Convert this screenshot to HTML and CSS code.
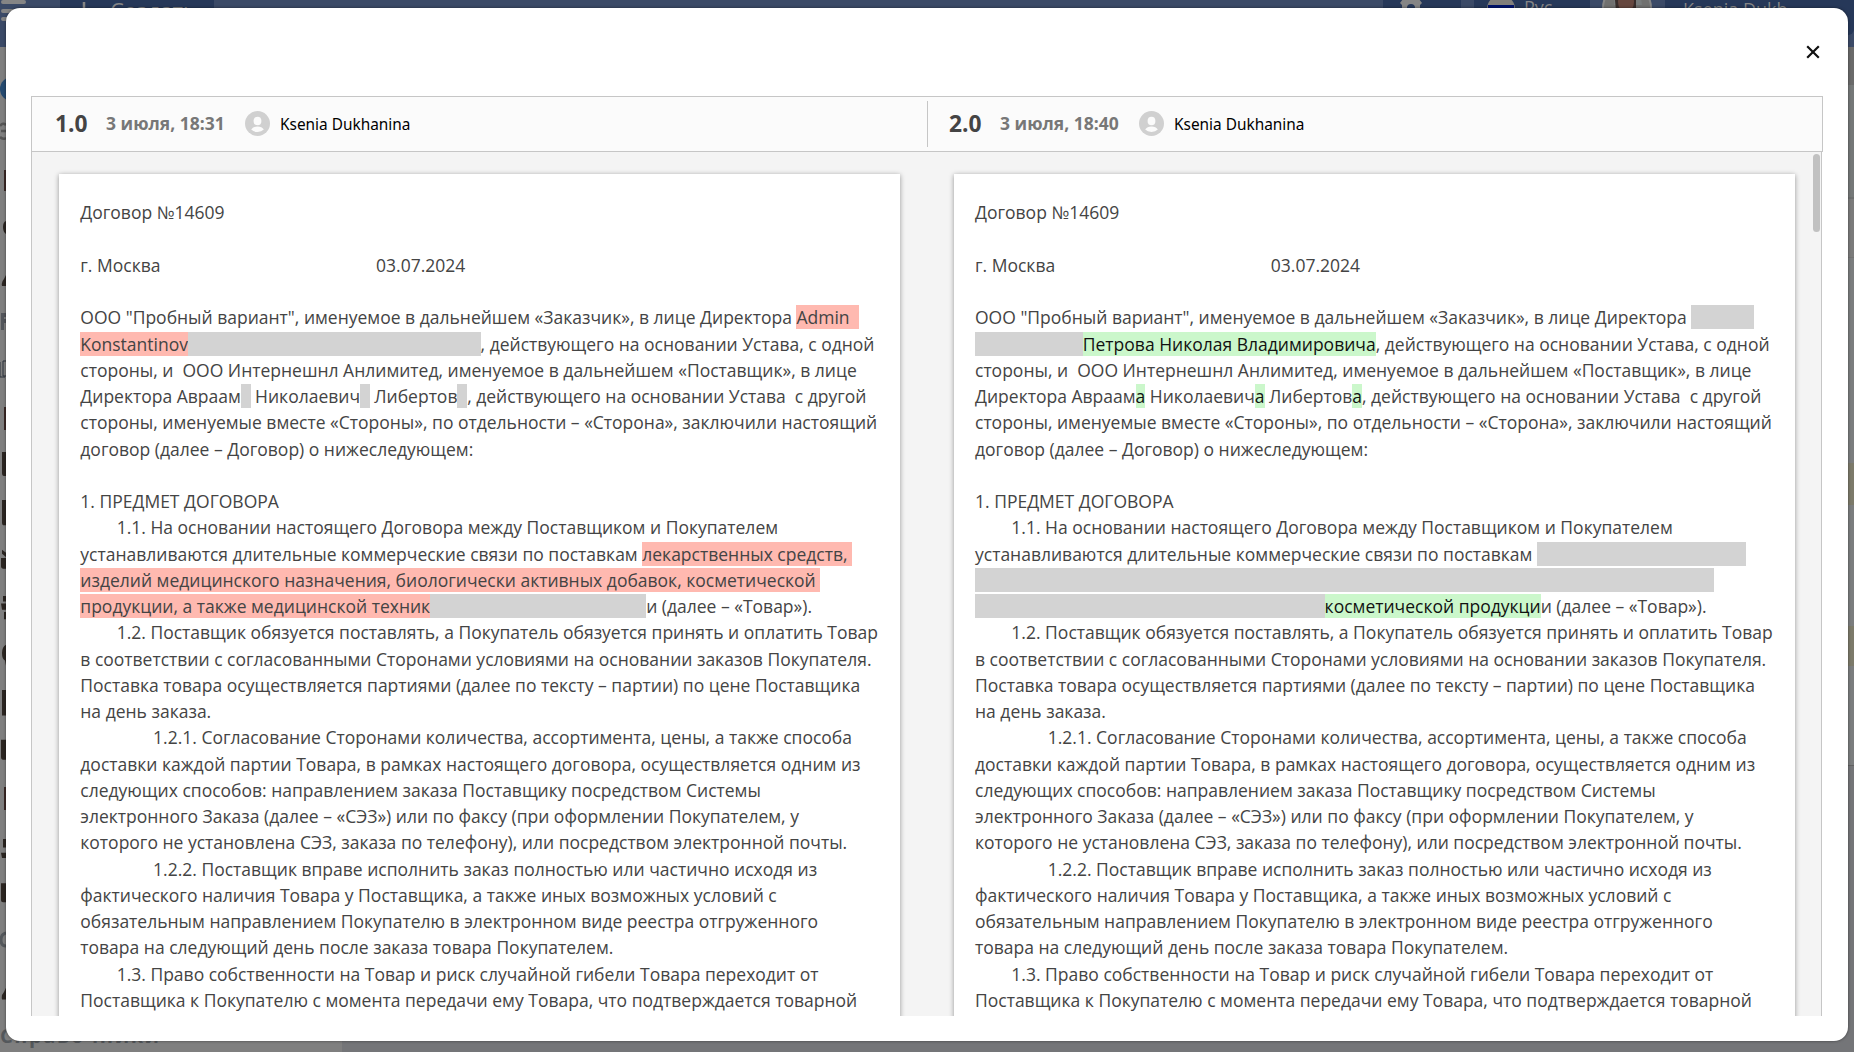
FILE: index.html
```html
<!DOCTYPE html>
<html lang="ru">
<head>
<meta charset="utf-8">
<title>Сравнение версий</title>
<link rel="stylesheet" href="styles.css">
</head>
<body>
<div class="app">
  <header class="topbar">
    <svg class="burger" width="27" height="24" viewBox="0 0 27 24"><path d="M3 2H24M3 11H24M3 19H24" stroke="currentColor" stroke-width="4" stroke-linecap="round"/></svg>
    <div class="create"><svg width="20" height="20" viewBox="0 0 20 20"><path d="M10 1V19M1 10H19" stroke="currentColor" stroke-width="2.5"/></svg><span>Создать</span></div>
    <div class="tools">
      <div class="tool settings"><svg width="24" height="24" viewBox="0 0 24 24"><path fill="currentColor" fill-rule="evenodd" d="M10 0h4l1 3 2 1 3-1 3 4-2 2v3l2 3-3 4-3-1-2 1-1 3h-4l-1-3-2-1-3 1-3-4 2-3V9L1 7l3-4 3 1 2-1zM12 8a4 4 0 100 8 4 4 0 000-8z"/></svg><i class="chev"></i></div>
      <div class="tool lang"><svg width="28" height="28" viewBox="0 0 28 28"><circle cx="14" cy="14" r="14" fill="#817f7b"/><path d="M1 10H27V18H1z" fill="#00136c"/></svg><span>Рус</span><i class="chev"></i></div>
      <svg class="photo" width="50" height="50" viewBox="0 0 50 50"><circle cx="25" cy="25" r="24" fill="#70706f" stroke="#858585" stroke-width="2"/><path d="M13 8h8v14h-9zM33 8h5l2 14h-8z" fill="#777b7b"/><path d="M13 17Q14 3 25 4Q34 4 34 17V28H14z" fill="#382d2b"/><ellipse cx="24" cy="19" rx="8" ry="11" fill="#66473f"/></svg>
      <div class="tool user"><span>Ksenia Dukh</span><i class="chev"></i></div>
    </div>
  </header>
  <div class="workspace">
    <nav class="rail">
      <svg width="6" height="960" viewBox="0 47 6 960">
        <circle cx="12" cy="89" r="12" fill="#254a70"/>
        <path d="M0 126Q3 122 6 125M1 131H6M0 137Q3 140 6 138" fill="none" stroke="#555" stroke-width="2.5"/>
        <path fill="#3b2926" d="M4 170h2v21H4zM4 407h2v23H4zM4 787h2v23H4z"/>
        <path fill="#2b2521" d="M6 221q-3 1-3 6t3 7zM6 275l-2 4q-3 3-2 7h4zM2 452h4v24H4q-2 0-2-3z"/>
        <path fill="#2b2521" transform="translate(0 500) scale(1 1.056) translate(0 -500)" d="M2 500h4v24H4q-2 0-2-3zM2 547l4 3v4l-4-3zM1 555h5v10H3q-2 0-2-2zM3 591h3v5H3zM1 598h5v6H2zM4 606h2v7H4zM6 637q-4 2-4 8t3 7l1 5zM2 680h4v24H2zM1 727h5v19H3q-2 0-2-3zM3 821h3v8H3zM1 834h5v5H2zM1 863h5v18H3q-2 0-2-2zM6 962l-2 4q-3 3-2 7h4z"/>
        <path fill="#53565b" d="M1 313h5v4H4v2h2v4H4v7H1z"/>
        <path d="M6 361H3V376H6M0 362V377H5" fill="none" stroke="#2a313b"/>
        <path d="M6 933Q1 934 1 940T6 946" fill="none" stroke="#54585c" stroke-width="3"/>
      </svg>
    </nav>
    <div class="content-edge"></div>
  </div>
  <div class="group-title">Справочники</div>
</div>

<div class="modal">
  <div class="modal-head">
    <svg class="close" width="14" height="14" viewBox="0 0 14 14"><path d="M1.2 1.2L12.8 12.8M12.8 1.2L1.2 12.8" stroke="#111" stroke-width="2.2"/></svg>
  </div>
  <div class="versions">
    <div class="version">
      <span class="number">1.0</span><span class="date">3 июля, 18:31</span>
      <svg class="avatar" width="25" height="25" viewBox="0 0 25 25"><circle cx="12.5" cy="12.5" r="12.5" fill="#d0d0d0"/><ellipse cx="12.5" cy="10" rx="3.9" ry="4.3" fill="#fbfbfb"/><path d="M6.2 18.6Q8 15.5 12.5 15.5T18.8 18.6Q16.5 21 12.5 21T6.2 18.6z" fill="#fbfbfb"/></svg>
      <span class="author">Ksenia Dukhanina</span>
    </div>
    <div class="version">
      <span class="number">2.0</span><span class="date">3 июля, 18:40</span>
      <svg class="avatar" width="25" height="25" viewBox="0 0 25 25"><circle cx="12.5" cy="12.5" r="12.5" fill="#d0d0d0"/><ellipse cx="12.5" cy="10" rx="3.9" ry="4.3" fill="#fbfbfb"/><path d="M6.2 18.6Q8 15.5 12.5 15.5T18.8 18.6Q16.5 21 12.5 21T6.2 18.6z" fill="#fbfbfb"/></svg>
      <span class="author">Ksenia Dukhanina</span>
    </div>
  </div>
  <div class="compare">
    <article class="page">Договор №14609

г. Москва                                               <span class="signed">03.07.2024</span>

ООО "Пробный вариант", именуемое в дальнейшем «Заказчик», в лице Директора <del>Admin  </del>
<del>Konstantinov</del><span class="gap" style="padding-left:292.6px"></span>, действующего на основании Устава, с одной
стороны, и  ООО Интернешнл Анлимитед, именуемое в дальнейшем «Поставщик», в лице
Директора Авраам<span class="gap" style="padding-left:9.7px"></span> Николаевич<span class="gap" style="padding-left:9.7px"></span> Либертов<span class="gap" style="padding-left:9.7px"></span>, действующего на основании Устава  с другой
стороны, именуемые вместе «Стороны», по отдельности – «Сторона», заключили настоящий
договор (далее – Договор) о нижеследующем:

1. ПРЕДМЕТ ДОГОВОРА
        1.1. На основании настоящего Договора между Поставщиком и Покупателем
устанавливаются длительные коммерческие связи по поставкам <del>лекарственных средств, </del>
<del>изделий медицинского назначения, биологически активных добавок, косметической </del>
<del>продукции, а также медицинской техник</del><span class="gap" style="padding-left:216px"></span>и (далее – «Товар»).
        1.2. Поставщик обязуется поставлять, а Покупатель обязуется принять и оплатить Товар
в соответствии с согласованными Сторонами условиями на основании заказов Покупателя.
Поставка товара осуществляется партиями (далее по тексту – партии) по цене Поставщика
на день заказа.
                1.2.1. Согласование Сторонами количества, ассортимента, цены, а также способа
доставки каждой партии Товара, в рамках настоящего договора, осуществляется одним из
следующих способов: направлением заказа Поставщику посредством Системы
электронного Заказа (далее – «СЭЗ») или по факсу (при оформлении Покупателем, у
которого не установлена СЭЗ, заказа по телефону), или посредством электронной почты.
                1.2.2. Поставщик вправе исполнить заказ полностью или частично исходя из
фактического наличия Товара у Поставщика, а также иных возможных условий с
обязательным направлением Покупателю в электронном виде реестра отгруженного
товара на следующий день после заказа товара Покупателем.
        1.3. Право собственности на Товар и риск случайной гибели Товара переходит от
Поставщика к Покупателю с момента передачи ему Товара, что подтверждается товарной</article>
    <article class="page">Договор №14609

г. Москва                                               <span class="signed">03.07.2024</span>

ООО "Пробный вариант", именуемое в дальнейшем «Заказчик», в лице Директора <span class="gap" style="padding-left:62.5px"></span>
<span class="gap" style="padding-left:107.8px"></span><ins>Петрова Николая Владимировича</ins>, действующего на основании Устава, с одной
стороны, и  ООО Интернешнл Анлимитед, именуемое в дальнейшем «Поставщик», в лице
Директора Авраам<ins>а</ins> Николаевич<ins>а</ins> Либертов<ins>а</ins>, действующего на основании Устава  с другой
стороны, именуемые вместе «Стороны», по отдельности – «Сторона», заключили настоящий
договор (далее – Договор) о нижеследующем:

1. ПРЕДМЕТ ДОГОВОРА
        1.1. На основании настоящего Договора между Поставщиком и Покупателем
устанавливаются длительные коммерческие связи по поставкам <span class="gap" style="padding-left:209px"></span>
<span class="gap" style="padding-left:739.4px"></span>
<span class="gap" style="padding-left:349.6px"></span><ins>косметической продукци</ins>и (далее – «Товар»).
        1.2. Поставщик обязуется поставлять, а Покупатель обязуется принять и оплатить Товар
в соответствии с согласованными Сторонами условиями на основании заказов Покупателя.
Поставка товара осуществляется партиями (далее по тексту – партии) по цене Поставщика
на день заказа.
                1.2.1. Согласование Сторонами количества, ассортимента, цены, а также способа
доставки каждой партии Товара, в рамках настоящего договора, осуществляется одним из
следующих способов: направлением заказа Поставщику посредством Системы
электронного Заказа (далее – «СЭЗ») или по факсу (при оформлении Покупателем, у
которого не установлена СЭЗ, заказа по телефону), или посредством электронной почты.
                1.2.2. Поставщик вправе исполнить заказ полностью или частично исходя из
фактического наличия Товара у Поставщика, а также иных возможных условий с
обязательным направлением Покупателю в электронном виде реестра отгруженного
товара на следующий день после заказа товара Покупателем.
        1.3. Право собственности на Товар и риск случайной гибели Товара переходит от
Поставщика к Покупателю с момента передачи ему Товара, что подтверждается товарной</article>
    <div class="thumb"></div>
  </div>
</div>
</body>
</html>
```
FILE: styles.css
```css
* { box-sizing: border-box; }
body {
  margin: 0;
  height: 1052px;
  overflow: hidden;
  position: relative;
  font-family: "Open Sans", sans-serif;
}
.app {
  height: 1052px;
  overflow: hidden;
  position: relative;
  background: linear-gradient(90deg, #7f7f7f 342px, #747578 342px);
}
.topbar {
  height: 47px;
  display: flex;
  align-items: flex-start;
  background: #3b4a67;
  color: #858585;
}
.burger { margin-right: 33px; }
.create {
  width: 154px;
  height: 35px;
  display: flex;
  gap: 16px;
  padding-left: 14px;
  background: #263859;
  font-size: 22px;
  font-weight: 500;
  line-height: 20px;
}
.create svg { margin-top: 1px; }
.tools { display: flex; margin-left: auto; }
.tool { height: 35px; display: flex; background: #263859; font-size: 18px; line-height: 14px; }
.settings { width: 78px; padding-left: 16px; margin-right: 13px; }
.settings svg { margin-top: -4px; }
.lang { width: 116px; padding-left: 13px; margin-right: 12px; }
.lang svg { margin: -5px 9px 0 0; }
.photo { margin: -17px 13px 0 0; }
.user { width: 189px; padding-left: 18px; border-radius: 0 0 6px 0; line-height: 18px; }
.chev {
  width: 8px;
  height: 8px;
  margin: 6px 0 0 13px;
  border: solid #858585;
  border-width: 0 2px 2px 0;
  transform: rotate(45deg);
}
.user .chev { margin-left: 36px; }
.workspace { display: flex; justify-content: space-between; }
.content-edge {
  width: 8px;
  height: 719px;
  border-bottom: 1px solid #626262;
  background: linear-gradient(
    #6a6a6a 38px, #757878 38px 150px, #6d6f6f 150px 152px,
    #7b7b7b 152px 210px, #737373 210px 211px, #7b7d7e 211px 416px,
    #7c7a6a 416px 458px, #7b7d7e 458px 579px, #7c7a6a 579px 619px, #7b7d7e 619px);
}
.group-title {
  position: absolute;
  left: 0;
  bottom: 1px;
  font-size: 20px;
  font-weight: 700;
  line-height: 30px;
  letter-spacing: 1.6px;
  color: #54585c;
}
.modal {
  position: absolute;
  left: 6px;
  top: 8px;
  width: 1842px;
  height: 1033px;
  padding: 0 25px 25px;
  display: flex;
  flex-direction: column;
  border-radius: 14px;
  background: #fff;
  box-shadow: 0 0 3px rgba(0, 0, 0, 0.5);
}
.modal-head { height: 88px; display: flex; justify-content: flex-end; }
.close { margin: 37px 3px 0 0; }
.versions {
  height: 56px;
  display: flex;
  align-items: center;
  border: 1px solid #c6c6c6;
  background: #fbfbfb;
}
.version { width: 895px; height: 46px; display: flex; align-items: center; padding: 0 0 2px 23px; }
.version + .version { border-left: 1px solid #c6c6c6; padding-left: 21px; }
.number { width: 51px; font-size: 22.75px; font-weight: 700; color: #444; }
.date { width: 139px; font-size: 17.5px; font-weight: 700; color: #777; white-space: nowrap; }
.author { margin-left: 10px; padding-top: 2px; font-family: "Noto Sans", sans-serif; font-size: 15.4px; color: #000; }
.compare {
  flex: 1;
  min-height: 0;
  width: 1791px;
  position: relative;
  display: flex;
  gap: 54px;
  padding: 22px 0 0 27px;
  overflow: hidden;
  border: solid #c6c6c6;
  border-width: 0 1px;
  background: #f4f4f4;
}
.page {
  flex: none;
  width: 841px;
  height: 900px;
  padding: 25.35px 0 0 21.3px;
  background: #fff;
  box-shadow: 0 1px 5px rgba(0, 0, 0, 0.4);
  font-size: 17.5px;
  line-height: 26.25px;
  white-space: pre;
  color: #444;
}
.page + .page { padding-left: 21px; }
.signed { margin-left: 2px; }
del, ins { text-decoration: none; }
del { background: #ffb9b0; }
ins { background: #cbf7cb; color: #111; }
.gap { background: #d3d3d3; }
.thumb {
  position: absolute;
  right: 1px;
  top: 2px;
  width: 7px;
  height: 78px;
  border-radius: 4px;
  background: #c1c1c1;
}
```
